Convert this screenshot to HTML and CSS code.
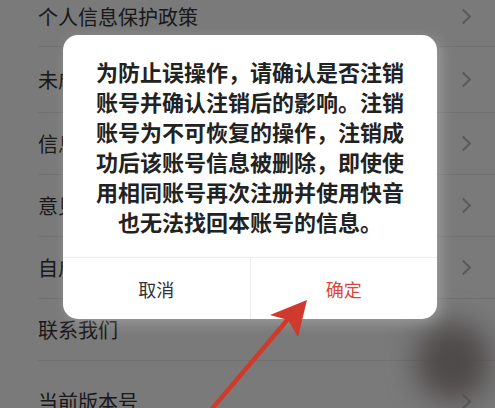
FILE: index.html
```html
<!DOCTYPE html>
<html lang="zh-CN">

<head>
    <meta charset="UTF-8">
    <meta name="viewport" content="width=device-width, initial-scale=1.0">
    <title>账号注销</title>
    <link rel="stylesheet" href="styles.css">
</head>

<body>
    <div class="page">
        <ul class="menu">
            <li class="menu-item"><span>个人信息保护政策</span><i class="chevron"></i></li>
            <li class="menu-item"><span class="under">未成年人</span><i class="chevron"></i></li>
            <li class="menu-item"><span class="under">信息收集</span><i class="chevron"></i></li>
            <li class="menu-item"><span class="under">意见反馈</span><i class="chevron"></i></li>
            <li class="menu-item"><span class="under">自启动</span><i class="chevron"></i></li>
            <li class="menu-item"><span>联系我们</span></li>
            <li class="menu-item last"><span>当前版本号</span><i class="chevron"></i></li>
        </ul>

        <div class="mask"></div>
        <div class="blur-spot"></div>

        <div class="dialog">
            <p class="dialog-text">
                为防止误操作，请确认是否注销<br>
                账号并确认注销后的影响。注销<br>
                账号为不可恢复的操作，注销成<br>
                功后该账号信息被删除，即使使<br>
                用相同账号再次注册并使用快音<br>
                也无法找回本账号的信息。
            </p>
            <div class="dialog-actions">
                <button class="btn">取消</button>
                <button class="btn btn-confirm">确定</button>
            </div>
        </div>

        <!-- annotation arrow -->
        <svg class="arrow" width="495" height="408" viewBox="0 0 495 408">
            <line x1="211" y1="410" x2="289" y2="318" stroke="#cf3a2c" stroke-width="4.5" stroke-linecap="round" />
            <polygon points="307,300 270,315 288,320 298,337" fill="#cf3a2c" />
        </svg>
    </div>
</body>

</html>
```

FILE: styles.css
```css
* {
    box-sizing: border-box;
}

body {
    margin: 0;
    font-family: "Noto Sans CJK SC", "Noto Sans", sans-serif;
    background-color: #7b7b7b;
}

.page {
    position: relative;
    width: 495px;
    height: 408px;
    overflow: hidden;
    background-color: #f4f4f4;
}

.menu {
    list-style: none;
    margin: -14px 0 0 0;
    padding: 0;
}

.menu-item {
    display: flex;
    align-items: center;
    justify-content: space-between;
    height: 62px;
    margin-left: 38px;
    padding-right: 26px;
    border-bottom: 1px solid #e2e2e2;
    font-size: 20px;
    color: #333;
    white-space: nowrap;
}

/* rows hidden behind the dialog */
.menu-item .under {
    max-width: 25px;
    overflow: hidden;
}

.menu-item:first-child {
    height: 61px;
}

.menu-item:nth-child(2) {
    height: 66px;
}

.menu-item.last {
    height: 80px;
    border-bottom: none;
}

.chevron {
    width: 11px;
    height: 11px;
    border-top: 2px solid #b5b5b5;
    border-right: 2px solid #b5b5b5;
    transform: rotate(45deg);
}

.mask {
    position: absolute;
    inset: 0;
    background-color: rgba(0, 0, 0, 0.5);
}

.blur-spot {
    position: absolute;
    left: 415px;
    top: 322px;
    width: 76px;
    height: 80px;
    border-radius: 50%;
    background-color: #4f4a4a;
    filter: blur(14px);
}

.dialog {
    position: absolute;
    left: 63px;
    top: 35px;
    width: 374px;
    height: 284px;
    display: flex;
    flex-direction: column;
    background-color: #fff;
    border-radius: 15px;
    box-shadow: 4px 4px 14px rgba(255, 255, 255, 0.25);
}

.dialog-text {
    flex: 1;
    margin: 0;
    padding: 21px 20px 0;
    font-size: 22px;
    line-height: 30px;
    font-weight: 600;
    color: #222;
    text-align: center;
}

.dialog-actions {
    display: flex;
    height: 62px;
    border-top: 1px solid #ececec;
}

.btn {
    flex: 1;
    border: none;
    background: none;
    font-family: inherit;
    font-size: 18px;
    color: #333;
    padding: 0;
}

.btn-confirm {
    color: #d9473d;
    border-left: 1px solid #ececec;
}

.arrow {
    position: absolute;
    left: 0;
    top: 0;
}
```
